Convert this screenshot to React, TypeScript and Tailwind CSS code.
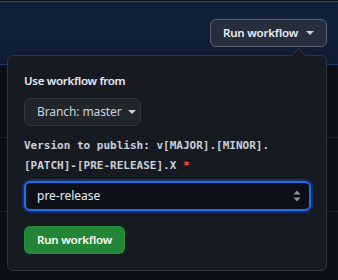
import React from "react";

const sans = { fontFamily: '"Noto Sans", "Open Sans", sans-serif' };

const Caret = ({ className = "" }: { className?: string }) => (
  <svg width="8" height="4" viewBox="0 0 8 4" className={className}>
    <path d="M0 0h8L4 4z" fill="currentColor" />
  </svg>
);

const SelectArrows = () => (
  <svg width="8" height="12" viewBox="0 0 8 12" className="text-[#8b949e]">
    <path d="M4 0.5L7.5 4.5h-7z" fill="currentColor" />
    <path d="M4 11.5L0.5 7.5h7z" fill="currentColor" />
  </svg>
);

export default function App() {
  return (
    <div className="relative w-[338px] h-[280px] overflow-hidden bg-[#0d1117]" style={sans}>
      {/* header strip behind the menu */}
      <div className="h-[64px] bg-gradient-to-b from-[#13223c] to-[#0f1c33] border-b border-[#1d3863]">
        <div className="h-px mt-px bg-[#2b4a7a]" />
        <div className="flex justify-end pr-[11px] pt-[17px]">
          <button className="flex items-center gap-[8px] h-[28px] w-[117px] pl-[12px] rounded-md border border-[#596273] bg-[#272f3d] text-[11.5px] tracking-[-0.2px] font-semibold text-[#e6edf3]">
            Run workflow
            <Caret className="text-[#c9d1d9]" />
          </button>
        </div>
      </div>
      <div className="h-[73px] border-b border-[#21262d]" />
      <div className="h-[74px] border-b border-[#21262d]" />

      {/* dropdown menu */}
      <div className="absolute left-[7px] top-[55px] w-[320px] h-[216px] rounded-md border border-[#30363d] bg-[#161b22] pl-[16px] pr-[16px] pt-[16px] shadow-lg">
        <div className="absolute -top-[6px] left-[285px] w-[11px] h-[11px] rotate-45 border-l border-t border-[#30363d] bg-[#161b22]" />
        <div className="text-[11.5px] tracking-[-0.3px] leading-[18px] font-semibold text-[#e6edf3]">Use workflow from</div>
        <button className="mt-[8px] flex items-center gap-[6px] h-[28px] w-[117px] pl-[12px] rounded-md border border-[#30363d] bg-[#21262d] text-[12px] tracking-[-0.1px] text-[#c9d1d9]">
          Branch: master
          <Caret className="text-[#c9d1d9]" />
        </button>
        <div
          className="mt-[10px] text-[11px] leading-[20px] font-bold text-[#c9d1d9]"
          style={{ fontFamily: '"DejaVu Sans Mono", "Liberation Mono", monospace' }}
        >
          Version to publish: v[MAJOR].[MINOR].
          <br />
          [PATCH]-[PRE-RELEASE].X <span className="text-[#f85149]">*</span>
        </div>
        <div className="mt-[5px] flex items-center justify-between h-[30px] w-[287px] rounded-md border-2 border-[#1f6feb] bg-[#0d1117] pl-[11px] pr-[8px] ring-2 ring-[#0f2e66] text-[12px] text-[#e6edf3]">
          pre-release
          <SelectArrows />
        </div>
        <button className="mt-[15px] h-[28px] w-[101px] rounded-md border border-[#2ea043]/40 bg-[#238636] text-[11.5px] tracking-[-0.2px] font-semibold text-white">
          Run workflow
        </button>
      </div>
    </div>
  );
}
